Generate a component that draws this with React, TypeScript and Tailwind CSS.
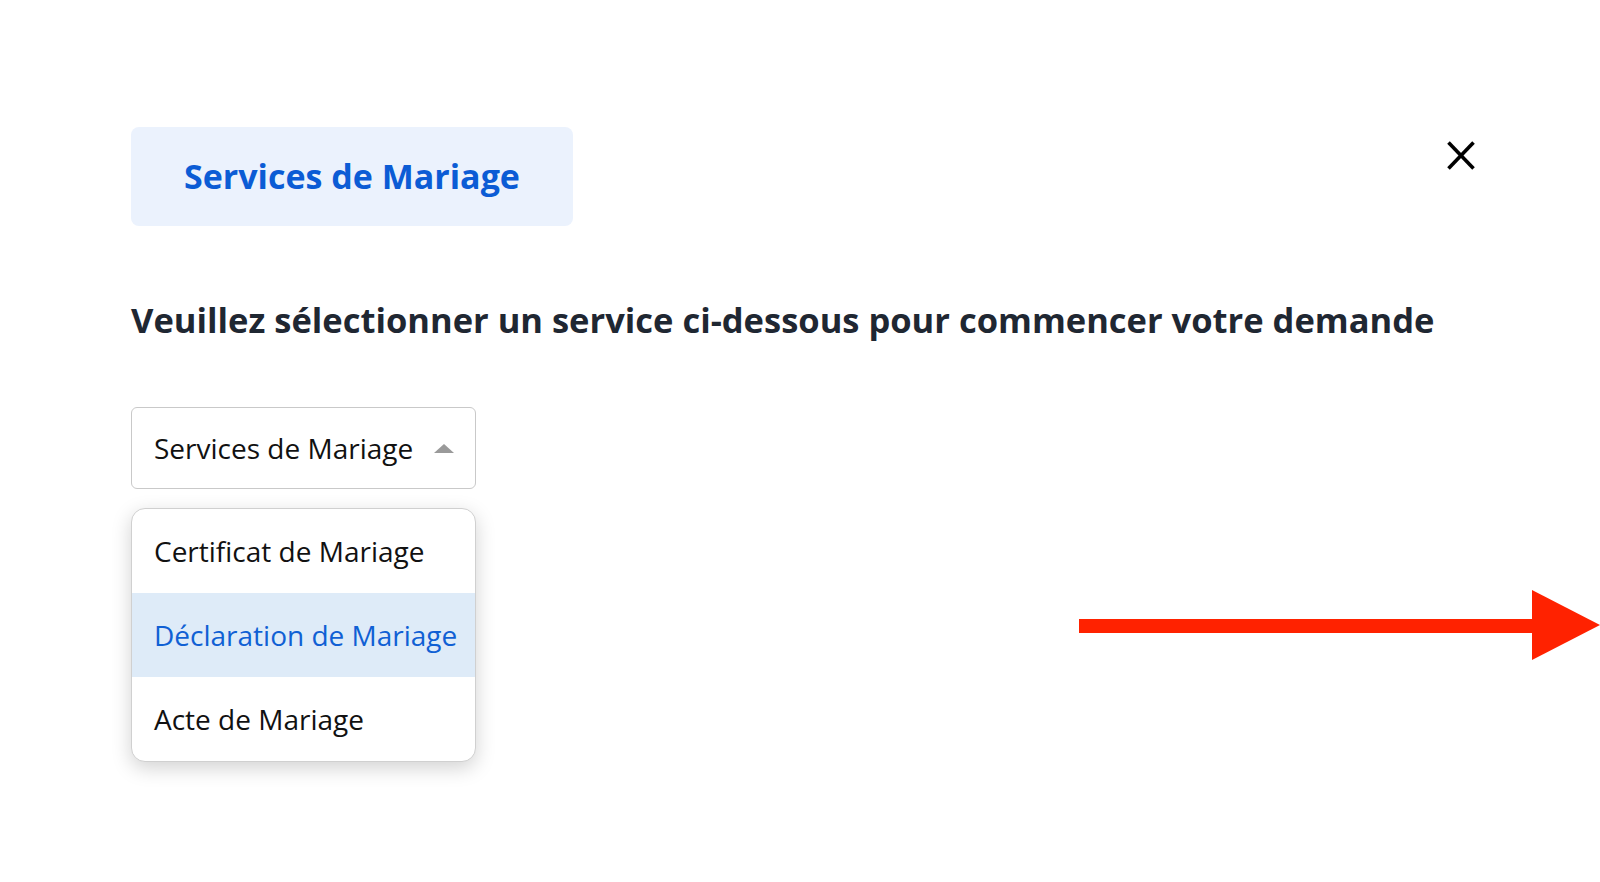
import React from 'react';

export default function App() {
  const options = ['Certificat de Mariage', 'Déclaration de Mariage', 'Acte de Mariage'];
  const active = 1;

  return (
    <div
      className="relative min-h-[882px] w-full overflow-hidden bg-white pl-[131px] pr-[125px] pt-[127px] text-[#1f2732]"
      style={{ fontFamily: '"Open Sans", "Noto Sans", sans-serif' }}
    >
      {/* header */}
      <div className="flex items-start justify-between">
        <div className="flex h-[99px] items-center rounded-lg bg-[#ebf2fd] px-[53px]">
          <span className="text-[34px] font-bold text-[#0b5cd5]">Services de Mariage</span>
        </div>
        <button className="mt-[14px] text-black" aria-label="Fermer">
          <svg width="28" height="29" viewBox="0 0 28 29" fill="none" stroke="currentColor" strokeWidth="3.6">
            <path d="M1.5 1.5 L26.5 27.5" />
            <path d="M26.5 1.5 L1.5 27.5" />
          </svg>
        </button>
      </div>

      <h2 className="mt-[72px] text-[34.5px] font-bold leading-tight text-[#1f2732]">
        Veuillez sélectionner un service ci-dessous pour commencer votre demande
      </h2>

      {/* select */}
      <div className="relative mt-[66px] w-[345px]">
        <div className="flex h-[82px] items-center justify-between rounded-md border border-[#c9c9c9] bg-white pl-[22px] pr-[21px]">
          <span className="text-[28px] text-[#111]">Services de Mariage</span>
          <svg width="20" height="9" viewBox="0 0 20 9">
            <path d="M0 9 L10 0 L20 9 Z" fill="#9a9a9a" />
          </svg>
        </div>

        <div className="absolute left-0 top-[101px] w-[345px] overflow-hidden rounded-[14px] border border-[#d0d0d0] bg-white shadow-[0_6px_20px_rgba(0,0,0,0.18)]">
          {options.map((opt, i) => (
            <div
              key={opt}
              className={
                i === active
                  ? 'flex h-[84px] items-center bg-[#deebf8] pl-[22px] text-[28px] text-[#1060d4]'
                  : 'flex h-[84px] items-center pl-[22px] text-[28px] text-[#111]'
              }
            >
              {opt}
            </div>
          ))}
        </div>
      </div>

      {/* annotation arrow */}
      <svg className="absolute left-[1079px] top-[590px]" width="521" height="70" viewBox="0 0 521 70">
        <rect x="0" y="29" width="455" height="14" fill="#ff2200" />
        <path d="M453 0 L521 35 L453 70 Z" fill="#ff2200" />
      </svg>
    </div>
  );
}
